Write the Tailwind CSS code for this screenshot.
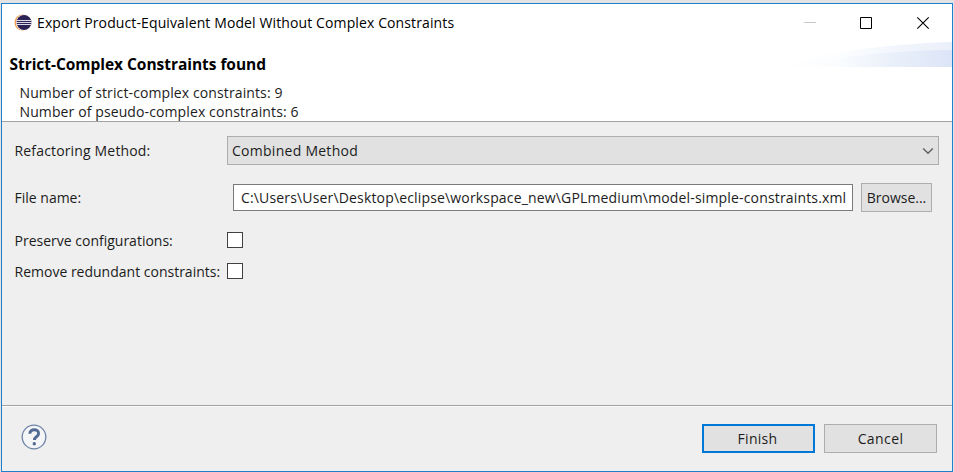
<!DOCTYPE html>
<html lang="en">
<head>
<meta charset="utf-8">
<title>Export Product-Equivalent Model Without Complex Constraints</title>
<script src="https://cdn.jsdelivr.net/npm/@tailwindcss/browser@4"></script>
</head>
<body class="w-[954px] h-[472px] overflow-hidden bg-[#e3e3e3] pt-[3px] pl-px font-['Open_Sans','Noto_Sans',sans-serif] text-[14px] text-[#1c1c1c] whitespace-nowrap">
<main class="flex flex-col w-[952px] h-[469px] border border-[#1c80cf] bg-[#efefef]">
  <div class="flex flex-col h-[117px] bg-white">
    <header class="flex items-center h-[38px] pl-3 text-black">
      <svg class="w-[19px] h-[18px] shrink-0" viewBox="0 0 19 18"><circle cx="8.500" cy="8.500" r="8" fill="#f59a48"/><circle cx="9.800" cy="8.500" r="8" fill="#fbeee0"/><circle cx="10" cy="8.500" r="7.500" fill="#2c2255"/><path d="M2.500 6.500h15M2 8.500h16M2.500 10.500h15" stroke="#dddbe8" stroke-width="1"/></svg>
      <h1 class="ml-1 flex-1 tracking-[0.115px]">Export Product-Equivalent Model Without Complex Constraints</h1>
      <svg class="w-[130px] h-[14px] mr-[21px]" viewBox="0 0 130 14" fill="none"><path d="M3 6.500h12" stroke="#c8c8c8"/><path d="M59.500 1.500h11v11h-11z" stroke="#000"/><path d="M116.300 1.300l11.400 11.400M127.700 1.300l-11.400 11.400" stroke="#000" stroke-width="1.100"/></svg>
    </header>
    <div class="flex justify-between h-[40px]">
      <h2 class="pl-[7.5px] pt-[11px] leading-[22px] text-[15.5px] font-bold tracking-[-0.04px] text-black">Strict-Complex Constraints found</h2>
      <svg class="w-[180px] h-[25px]" viewBox="0 0 180 25"><defs><linearGradient id="wave"><stop offset="0" stop-color="#fff"/><stop offset=".35" stop-color="#fafcfe"/><stop offset=".65" stop-color="#eaf0fa"/><stop offset="1" stop-color="#dce5f7"/></linearGradient></defs><path d="M5 25C45 12 110 2 180 0V25z" fill="url(#wave)" opacity=".6"/><path d="M5 25C70 15 110 9 180 8V25z" fill="url(#wave)"/></svg>
    </div>
    <div class="pl-[17.5px] pt-[2px] leading-[19px] tracking-[0.11px]"><p>Number of strict-complex constraints: 9</p><p>Number of pseudo-complex constraints: 6</p></div>
  </div>
  <div class="h-px bg-[#a2a2a2]"></div>
  <section class="h-[283px] pt-[14px] pl-[12px]">
    <div class="flex items-center h-[29px]"><label class="w-[213px] pl-[0.5px] tracking-[0.16px]">Refactoring Method:</label>
      <div class="flex items-center justify-between w-[712px] h-[29px] border border-[#adadad] bg-[#e1e1e1] pl-1 pr-1 tracking-[0.27px]">Combined Method<svg class="w-3 h-2" viewBox="0 0 12 8"><path d="M1.200 1.500L6 6.200l4.800-4.700" fill="none" stroke="#606060" stroke-width="1.500"/></svg></div></div>
    <div class="flex items-center h-[29px] mt-[18px]"><label class="w-[219px] pl-[0.5px]">File name:</label>
      <div class="flex items-center w-[620px] h-[27px] border border-[#7a7a7a] bg-white pl-[7px] tracking-[0.16px]">C:\Users\User\Desktop\eclipse\workspace_new\GPLmedium\model-simple-constraints.xml</div>
      <button class="ml-2 w-[71px] h-[29px] border border-[#adadad] bg-[#e1e1e1]">Browse...</button></div>
    <div class="flex items-center h-[18px] mt-[19px]"><label class="w-[213px] pl-[0.5px]">Preserve configurations:</label><i class="w-[16px] h-[16px] border border-[#404040] bg-white"></i></div>
    <div class="flex items-center h-[18px] mt-[13px]"><label class="w-[213px] pl-[0.5px]">Remove redundant constraints:</label><i class="w-[16px] h-[16px] border border-[#404040] bg-white"></i></div>
  </section>
  <div class="h-px bg-[#a2a2a2]"></div><div class="h-px bg-[#fafafa]"></div>
  <footer class="flex justify-between pt-[17px] pl-[19px] pr-[15px]">
    <svg class="w-[26px] h-[26px]" viewBox="0 0 26 26"><circle cx="13" cy="13" r="11.800" fill="#f4f5f7" stroke="#6d83a6" stroke-width="1.300"/><path d="M8.800 9.800c.2-5.600 8.800-5 8.800-.4 0 3.400-4.200 3.300-4.200 6.600" fill="none" stroke="#526b94" stroke-width="2.900"/><circle cx="13.300" cy="19.800" r="1.700" fill="#526b94"/></svg>
    <div class="flex gap-[9px]"><button class="w-[113px] h-[29px] border-2 border-[#0078d7] bg-[#e1e1e1] pr-0.5 tracking-[0.3px]">Finish</button><button class="w-[113px] h-[29px] border border-[#adadad] bg-[#e1e1e1] tracking-[0.4px]">Cancel</button></div>
  </footer>
</main>
</body>
</html>
